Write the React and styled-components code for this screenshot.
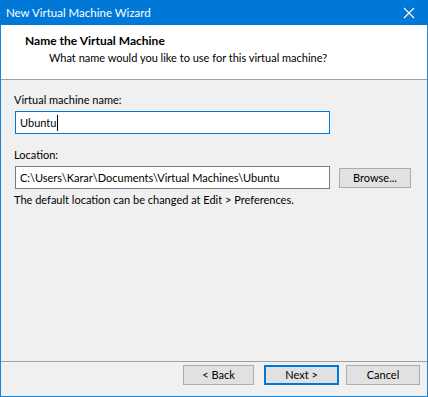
import React from "react";
import styled, { createGlobalStyle } from "styled-components";

const GlobalStyle = createGlobalStyle`
  html, body {
    margin: 0;
    padding: 0;
    background: #f0f0f0;
  }
  * {
    box-sizing: border-box;
  }
`;

const App = () => {
  return (
    <>
      <GlobalStyle />
      <Window>
        <TitleBar>
          <span>New Virtual Machine Wizard</span>
          <CloseIcon width="12" height="12" viewBox="0 0 12 12">
            <path d="M1 1 L11 11 M11 1 L1 11" stroke="#fff" strokeWidth="1.1" />
          </CloseIcon>
        </TitleBar>
        <Header>
          <h1>Name the Virtual Machine</h1>
          <p>What name would you like to use for this virtual machine?</p>
        </Header>
        <Body>
          <Label>Virtual machine name:</Label>
          <Field focused>
            Ubuntu<Caret />
          </Field>
          <Label className="spaced">Location:</Label>
          <Row>
            <Field>C:\Users\Karar\Documents\Virtual Machines\Ubuntu</Field>
            <Button width="72px">Browse...</Button>
          </Row>
          <Hint>The default location can be changed at Edit &gt; Preferences.</Hint>
        </Body>
        <Footer>
          <Button width="71px">&lt; Back</Button>
          <Button width="75px" primary gap="10px">
            Next &gt;
          </Button>
          <Button width="74px" gap="7px">
            Cancel
          </Button>
        </Footer>
      </Window>
    </>
  );
};

const Window = styled.div`
  width: 428px;
  height: 397px;
  display: flex;
  flex-direction: column;
  background: #f0f0f0;
  border: 1px solid #1883d7;
  border-top: none;
  font-family: Lato, "Noto Sans", sans-serif;
  font-size: 11px;
  color: #000;
`;

const TitleBar = styled.div`
  height: 25px;
  margin: 0 -1px;
  padding: 0 13px 0 6px;
  background: #0078d7;
  color: #fff;
  font-size: 11.5px;
  display: flex;
  align-items: center;
  justify-content: space-between;
`;

const CloseIcon = styled.svg`
  display: block;
`;

const Header = styled.div`
  height: 55px;
  background: #fff;
  border-bottom: 1px solid #a0a0a0;
  padding: 8px 0 0 24px;
  h1 {
    margin: 0;
    font-size: 12px;
    font-weight: bold;
    line-height: 16px;
  }
  p {
    margin: 1px 0 0 24px;
    line-height: 16px;
  }
`;

const Body = styled.div`
  flex: 1;
  padding: 12px 0 0 13px;
  display: flex;
  flex-direction: column;
  align-items: flex-start;
  .spaced {
    margin-top: 13px;
  }
`;

const Label = styled.div`
  line-height: 16px;
`;

const Row = styled.div`
  display: flex;
  align-items: center;
  gap: 9px;
  margin-top: 3px;
`;

const Field = styled.div`
  width: 315px;
  height: 23px;
  margin: ${(p) => (p.focused ? "3px 0 0 1px" : "0 0 0 1px")};
  background: #fff;
  border: 1px solid ${(p) => (p.focused ? "#0078d7" : "#7a7a7a")};
  padding: 0 4px;
  display: flex;
  align-items: center;
  line-height: 16px;
  white-space: nowrap;
`;

const Caret = styled.span`
  display: inline-block;
  width: 1px;
  height: 16px;
  background: #000;
  margin-left: 1px;
`;

const Hint = styled.div`
  margin-top: 3px;
  line-height: 16px;
`;

const Footer = styled.div`
  height: 35px;
  border-top: 1px solid #a0a0a0;
  display: flex;
  justify-content: flex-end;
  align-items: flex-start;
  padding: 2px 7px 0 0;
`;

const Button = styled.button`
  width: ${(p) => p.width};
  height: 20px;
  margin-left: ${(p) => p.gap || "0"};
  margin-top: 1px;
  background: #e1e1e1;
  border: ${(p) => (p.primary ? "2px solid #0078d7" : "1px solid #adadad")};
  font-family: inherit;
  font-size: 11px;
  color: #000;
  padding: 0;
  line-height: 16px;
`;

export default App;
